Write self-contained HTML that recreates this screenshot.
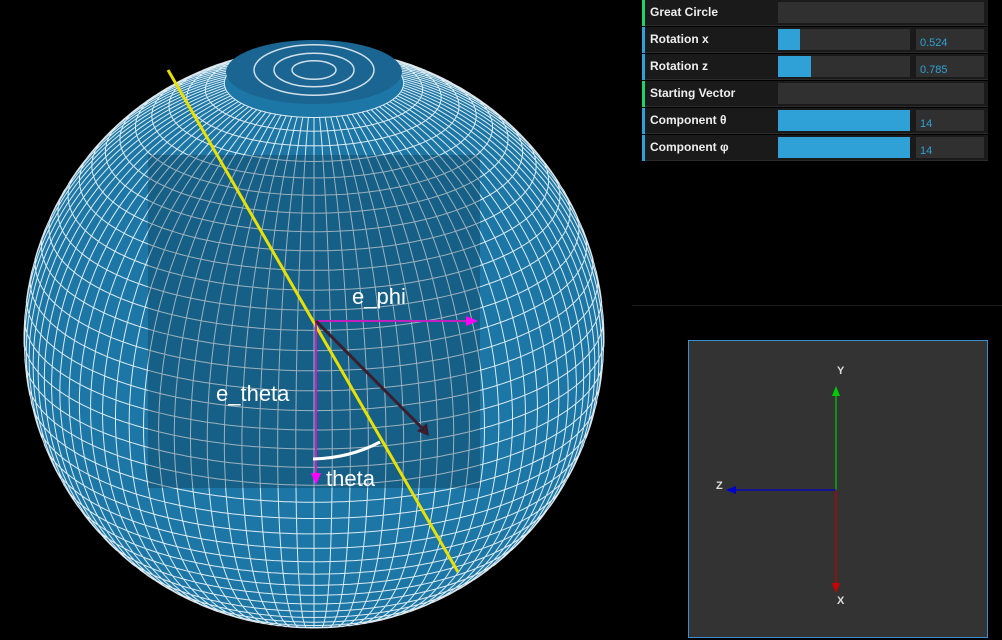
<!DOCTYPE html><html><head><style>
body{margin:0;width:1002px;height:640px;background:#000;overflow:hidden;position:relative;font-family:"Liberation Sans",sans-serif}
.row{position:absolute;left:642px;width:346px;height:26px;background:#1a1a1a;border-bottom:1px solid #2c2c2c;box-sizing:border-box}
.row .l{position:absolute;left:0;top:0;width:3px;height:26px}
.row .t{position:absolute;left:8px;top:5px;color:#eee;font-size:12px;font-weight:bold}
.row .b{position:absolute;left:136px;top:2px;width:132px;height:21px;background:#303030}
.row .f{position:absolute;left:0;top:0;height:21px;background:#2fa1d6}
.row .v{position:absolute;left:274px;top:2px;width:68px;height:21px;background:#303030;color:#2fa1d6;font-size:11px}
.row .v span{position:absolute;left:4px;bottom:1px}
.row .w{position:absolute;left:136px;top:2px;width:206px;height:21px;background:#303030}
</style></head><body>
<svg id="s" width="640" height="640" style="position:absolute;left:0;top:0"></svg>
<div class="row" style="top:0"><div class="l" style="background:#1ed36f"></div><div class="t">Great Circle</div><div class="w"></div></div>
<div class="row" style="top:27px"><div class="l" style="background:#2fa1d6"></div><div class="t">Rotation x</div><div class="b"><div class="f" style="width:22px"></div></div><div class="v"><span>0.524</span></div></div>
<div class="row" style="top:54px"><div class="l" style="background:#2fa1d6"></div><div class="t">Rotation z</div><div class="b"><div class="f" style="width:33px"></div></div><div class="v"><span>0.785</span></div></div>
<div class="row" style="top:81px"><div class="l" style="background:#1ed36f"></div><div class="t">Starting Vector</div><div class="w"></div></div>
<div class="row" style="top:108px"><div class="l" style="background:#2fa1d6"></div><div class="t">Component θ</div><div class="b"><div class="f" style="width:132px"></div></div><div class="v"><span>14</span></div></div>
<div class="row" style="top:135px"><div class="l" style="background:#2fa1d6"></div><div class="t">Component φ</div><div class="b"><div class="f" style="width:132px"></div></div><div class="v"><span>14</span></div></div>
<div style="position:absolute;left:632px;top:305px;width:370px;height:1px;background:#1a1a1a"></div>
<div style="position:absolute;left:688px;top:340px;width:298px;height:296px;border:1px solid #3a8fd0;background:#333"></div>
<svg width="1002" height="640" style="position:absolute;left:0;top:0">
<line x1="836" y1="490" x2="836" y2="394" stroke="#0c0" stroke-width="1.2"/><polygon points="836,386 832,396 840,396" fill="#0c0"/>
<line x1="836" y1="490" x2="734" y2="490" stroke="#00c" stroke-width="1.2"/><polygon points="726,490 736,486 736,494" fill="#00c"/>
<line x1="836" y1="490" x2="836" y2="584" stroke="#c00" stroke-width="1.2"/><polygon points="836,593 832,583 840,583" fill="#c00"/>
<text x="837" y="374" fill="#ddd" font-size="11" font-weight="bold">Y</text>
<text x="716" y="489" fill="#ddd" font-size="11" font-weight="bold">Z</text>
<text x="837" y="604" fill="#ddd" font-size="11" font-weight="bold">X</text>
</svg>
<script>
var s=document.getElementById('s'),cx=314,cy=338,R=290,t=22.5*Math.PI/180,ct=Math.cos(t),st=Math.sin(t);
var h='';
h+='<circle cx="'+cx+'" cy="'+cy+'" r="'+R+'" fill="#1c77a6"/>';
function P(la,lo){var x=Math.cos(la)*Math.sin(lo),y=Math.sin(la),z=Math.cos(la)*Math.cos(lo);var y2=y*ct-z*st,z2=y*st+z*ct;return [cx+R*x,cy-R*y2,z2];}
var d='',DG=Math.PI/180;
for(var i=-22;i<=18;i++){var la=i*4*DG,pen=false;for(var k=0;k<=360;k++){var p=P(la,k*DG);if(p[2]>-0.02){d+=(pen?'L':'M')+p[0].toFixed(1)+' '+p[1].toFixed(1);pen=true}else pen=false;}}
for(var j=0;j<100;j++){var lo=j*3.6*DG,pen=false;for(var k=-88;k<=72;k++){var p=P(k*DG,lo);if(p[2]>-0.02){d+=(pen?'L':'M')+p[0].toFixed(1)+' '+p[1].toFixed(1);pen=true}else pen=false;}}
h+='<path d="'+d+'" fill="none" stroke="#fff" stroke-opacity="0.85" stroke-width="1"/>';
h+='<ellipse cx="314" cy="72" rx="88" ry="32" fill="#1a6592"/>';
[60,40,22].forEach(function(r){h+='<ellipse cx="314" cy="70" rx="'+r+'" ry="'+(r*0.42)+'" fill="none" stroke="#fff" stroke-opacity=".8" stroke-width="1.5"/>'});
h+='<rect x="148" y="155" width="332" height="333" fill="#0a2a40" fill-opacity="0.3"/>';
h+='<line x1="168" y1="70" x2="458" y2="572" stroke="#e8e000" stroke-width="3"/>';
h+='<line x1="316" y1="321" x2="468" y2="321" stroke="#c020c0" stroke-width="2"/><polygon points="478,321 466,316 466,326" fill="#f0f"/>';
h+='<line x1="316" y1="321" x2="316" y2="474" stroke="#c020c0" stroke-width="2"/><polygon points="316,485 311,473 321,473" fill="#f0f"/>';
h+='<line x1="316" y1="321" x2="422" y2="428" stroke="#3a1e2e" stroke-width="3"/><polygon points="429,436 417,431 427,423" fill="#3a1e2e"/>';
h+='<path d="M313 459 Q350 458 380 442" fill="none" stroke="#fff" stroke-width="3"/>';
h+='<g fill="#fff" font-size="22"><text x="352" y="304">e_phi</text><text x="216" y="401">e_theta</text><text x="326" y="486">theta</text></g>';
s.innerHTML=h;
</script>
</body></html>
